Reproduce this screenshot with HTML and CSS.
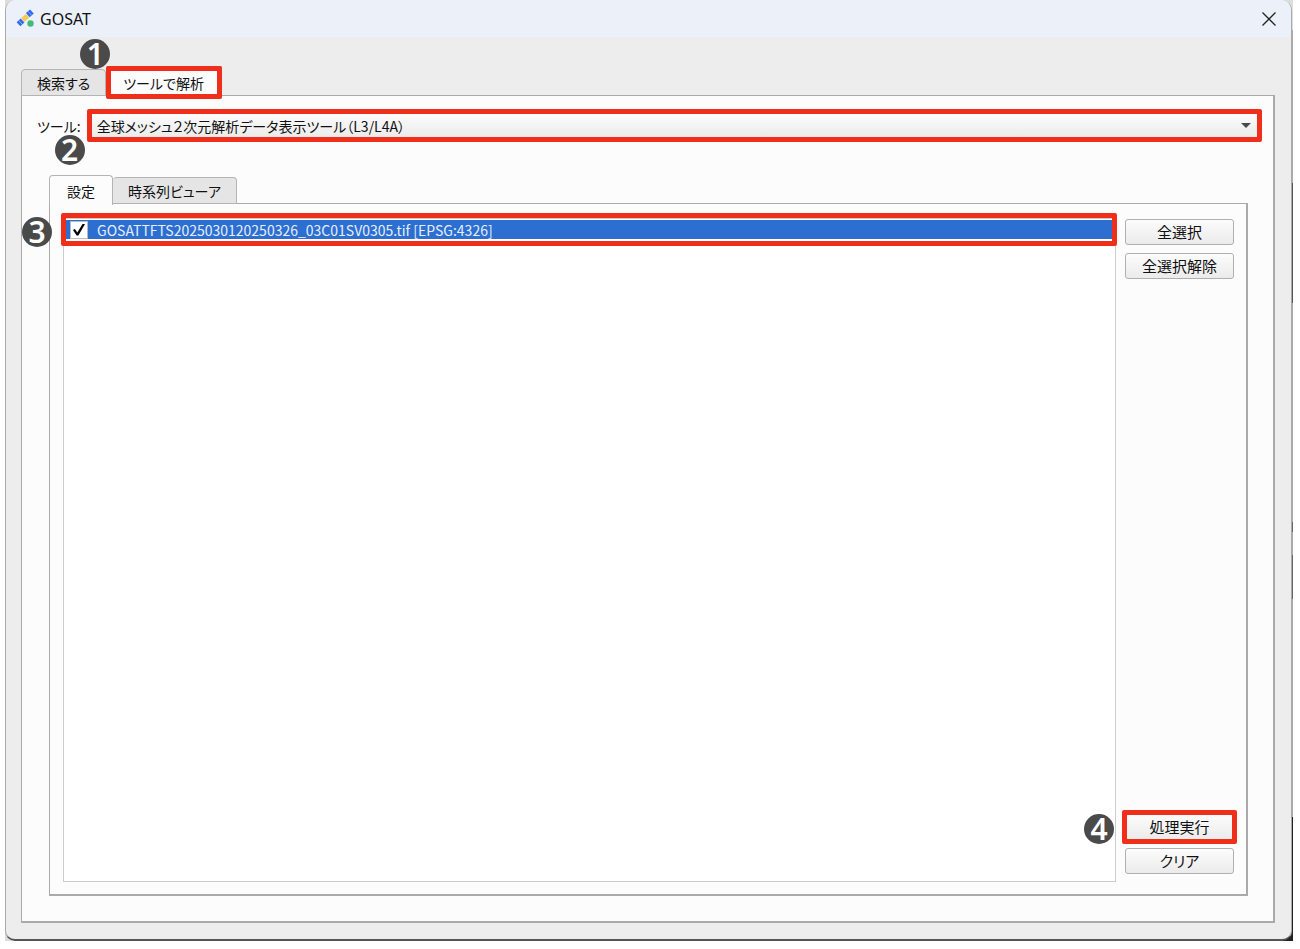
FILE: index.html
```
<!DOCTYPE html>
<html lang="ja">
<head>
    <meta charset="UTF-8">
    <meta name="viewport" content="width=device-width, initial-scale=1.0">
    <title>GOSAT</title>
    <link rel="stylesheet" href="styles.css">
</head>
<body>
    <div class="desktop">
        <div class="window">
            <header class="titlebar">
                <svg class="app-icon" width="18" height="18" viewBox="0 0 18 18">
                    <g transform="rotate(-42 9 8)">
                        <rect x="0" y="5.500" width="5.500" height="5.500" fill="#2f6bee"/>
                        <rect x="6" y="5.500" width="6.500" height="5" rx="1" fill="#f6cb52"/>
                        <rect x="13" y="5" width="5.500" height="5.500" fill="#2f6bee"/>
                        <path d="M2.700 5.500v5.500M15.700 5v5.500" stroke="#a9c2fa" stroke-width="0.700"/>
                    </g>
                    <circle cx="14.500" cy="13.500" r="3.200" fill="#41bb78"/>
                </svg>
                <h1>GOSAT</h1>
                <button class="close" type="button" aria-label="Close">
                    <svg width="14" height="14" viewBox="0 0 14 14">
                        <path d="M0.500 0.500l13 13M13.500 0.500l-13 13" stroke="#222" stroke-width="1.300" fill="none"/>
                    </svg>
                </button>
            </header>
            <main class="content">
                <div class="tabs">
                    <button class="tab" type="button">検索する</button>
                    <button class="tab active marked" type="button">ツールで解析<span class="badge badge-1">1</span></button>
                </div>
                <section class="pane">
                    <div class="tool-row">
                        <label for="tool">ツール:</label>
                        <div class="combo marked">
                            <span class="badge badge-2">2</span>
                            <select id="tool">
                                <option>全球メッシュ２次元解析データ表示ツール（L3/L4A）</option>
                            </select>
                        </div>
                    </div>
                    <div class="tabs inner-tabs">
                        <button class="tab active" type="button">設定</button>
                        <button class="tab" type="button">時系列ビューア</button>
                    </div>
                    <section class="pane inner-pane">
                        <ul class="file-list">
                            <li class="marked">
                                <span class="badge badge-3">3</span>
                                <div class="file">
                                    <input type="checkbox" id="file1" checked>
                                    <label for="file1">GOSATTFTS2025030120250326_03C01SV0305.tif [EPSG:4326]</label>
                                </div>
                            </li>
                        </ul>
                        <div class="actions">
                            <button class="btn" type="button">全選択</button>
                            <button class="btn" type="button">全選択解除</button>
                            <div class="run marked">
                                <span class="badge badge-4">4</span>
                                <button class="btn" type="button">処理実行</button>
                            </div>
                            <button class="btn" type="button">クリア</button>
                        </div>
                    </section>
                </section>
            </main>
        </div>
    </div>
</body>
</html>
```
FILE: styles.css
```
* {
    box-sizing: border-box;
}

body {
    margin: 0;
    background: #fff;
    color: #111;
    font-family: "Noto Sans CJK JP", sans-serif;
    font-size: 14px;
    line-height: 18px;
    font-feature-settings: "palt";
}

button, select, input {
    font: inherit;
    color: inherit;
    margin: 0;
    padding: 0;
    font-feature-settings: inherit;
}

.desktop {
    display: flex;
    min-height: calc(100vh - 8px);
    margin: 0 7px 0 5px;
    background: linear-gradient(to right, #ddd 50%, transparent 50%),
        linear-gradient(#ddd 30px, #aaa 30px 183px, #555 183px 303px, #aaa 303px 522px, #666 522px 532px, #aaa 532px 555px, #666 555px 599px, #aaa 599px 817px, #222 817px);
}

.window {
    flex: 1;
    display: flex;
    flex-direction: column;
    margin-right: 1px;
    border: 1px solid #aaa;
    border-top: none;
    border-bottom: 2px solid #555;
    border-radius: 10px;
    background: #ededed;
    overflow: hidden;
}

/* title bar */
.titlebar {
    display: flex;
    align-items: center;
    height: 37px;
    padding: 0 15px 0 10px;
    background: #ebf0f9;
}

.app-icon {
    overflow: visible;
}

.titlebar h1 {
    flex: 1;
    margin: 0 0 0 6px;
    font-family: "Noto Sans", sans-serif;
    font-size: 16px;
    font-weight: 400;
}

.close {
    display: flex;
    border: none;
    background: none;
}

.content {
    flex: 1;
    display: flex;
    flex-direction: column;
    padding: 29px 16px 16px 15px;
}

/* tabs */
.tabs {
    display: flex;
    align-items: flex-end;
    position: relative;
    z-index: 1;
}

.tab {
    height: 27px;
    padding: 0 15px;
    border: 1px solid #b4b4b4;
    border-radius: 4px 4px 0 0;
    background: #e5e5e5;
    white-space: nowrap;
}

.tab.active {
    height: 30px;
    padding: 0 17px;
    margin-bottom: -1px;
    border-bottom: none;
    background: #fcfcfc;
}

.tab.marked {
    height: 33px;
    margin-bottom: -3px;
}

.tab + .tab {
    border-left: none;
}

.pane {
    flex: 1;
    display: flex;
    flex-direction: column;
    margin-top: -1px;
    padding: 13px 11px 25px 15px;
    border: 1px solid #aaa;
    border-width: 1px 2px 2px 1px;
    background: #fcfcfc;
}

/* highlighted controls */
.marked {
    position: relative;
    outline: 5px solid #f02f1b;
    outline-offset: -5px;
    border-radius: 2px;
}

.badge {
    position: absolute;
    display: flex;
    justify-content: center;
    align-items: center;
    width: 30px;
    height: 30px;
    border-radius: 50%;
    background: #4a4a4a;
    color: #fff;
    font-family: "Noto Sans", sans-serif;
    font-size: 30px;
    font-weight: 600;
    line-height: 30px;
}

.badge-1 {
    left: -26px;
    top: -28px;
}

.badge-2 {
    left: -32px;
    top: 26px;
}

.badge-3 {
    left: -39px;
    top: 4px;
}

.badge-4 {
    left: -38px;
    top: 4px;
}

.tool-row {
    display: flex;
    align-items: center;
    gap: 6px;
}

.combo {
    flex: 1;
    padding: 5px;
}

.combo select {
    display: block;
    width: 100%;
    height: 23px;
    padding: 0 5px;
    border: none;
    appearance: none;
    background: linear-gradient(#fcfcfc, #ebebeb);
}

.combo::after {
    content: "";
    position: absolute;
    right: 11px;
    top: 14px;
    border: 5px solid transparent;
    border-top-color: #4a4a4a;
    border-bottom: none;
    pointer-events: none;
}

.inner-tabs {
    margin: 33px 12px 0;
}

.inner-pane {
    flex-direction: row;
    gap: 6px;
    margin: -1px 14px 0 12px;
    padding: 9px 9px 12px 10px;
}

/* file list */
.file-list {
    position: relative;
    flex: 1;
    margin: 5px 0 0 3px;
    padding: 0;
    border: 1px solid #ccc;
    background: #fff;
    list-style: none;
}

.file-list li {
    margin: -6px -2px 0 -3px;
    padding: 7px 5px;
}

.file {
    display: flex;
    align-items: center;
    gap: 9px;
    height: 19px;
    padding-left: 4px;
    background: #2c6fd1;
    color: #e6eefb;
}

.file input {
    width: 18px;
    height: 18px;
    border: 1px solid #bbb;
    appearance: none;
    background: #fff;
}

.file input:checked::before {
    content: "";
    display: block;
    width: 12px;
    height: 12px;
    margin: 2px;
    background: #000;
    clip-path: polygon(0 55%, 16% 45%, 36% 74%, 82% 0, 100% 4%, 45% 100%, 30% 100%);
}

/* buttons */
.actions {
    display: flex;
    flex-direction: column;
    gap: 8px;
    width: 115px;
    padding: 6px 0 8px;
}

.btn {
    height: 26px;
    margin: 0 3px;
    border: 1px solid #b0b0b0;
    border-radius: 3px;
    background: linear-gradient(#fcfcfc, #ebebeb);
    font-size: 15px;
}

.run {
    display: flex;
    margin-top: auto;
    margin-bottom: -4px;
    padding: 4px 3px;
}

.run .btn {
    flex: 1;
    margin: 0;
}
```
